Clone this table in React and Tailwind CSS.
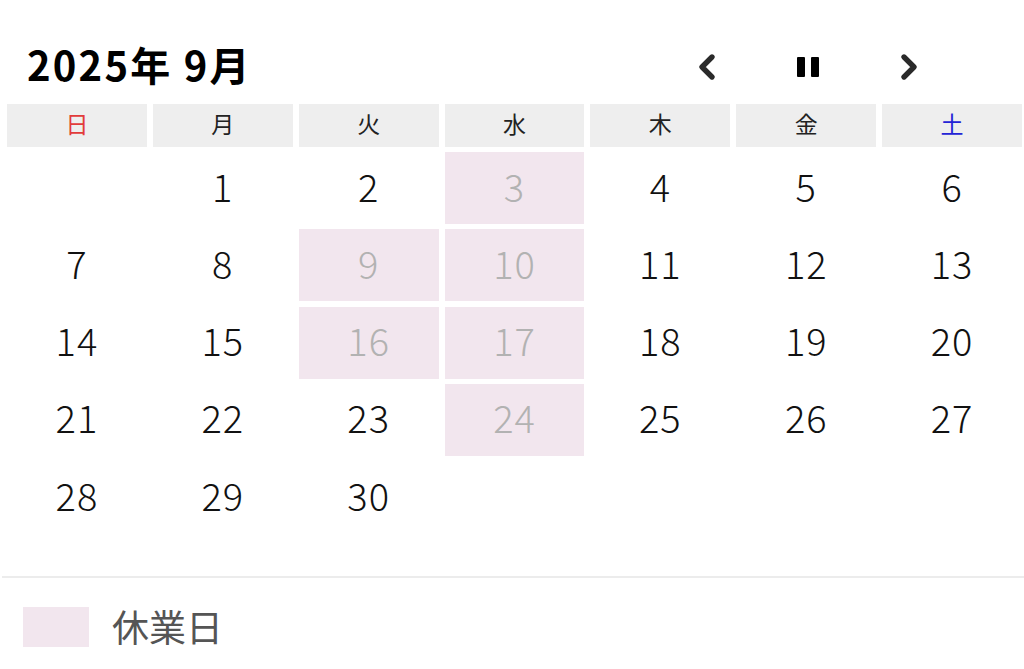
import { ChevronLeft, ChevronRight } from "lucide-react";

const weekdays = [
  { label: "日", color: "text-[#e23b3b]" },
  { label: "月", color: "text-[#222]" },
  { label: "火", color: "text-[#222]" },
  { label: "水", color: "text-[#222]" },
  { label: "木", color: "text-[#222]" },
  { label: "金", color: "text-[#222]" },
  { label: "土", color: "text-[#2424d6]" },
];

const holidays = [3, 9, 10, 16, 17, 24];

// September 2025 starts on Monday
const cells = [null, ...Array.from({ length: 30 }, (_, i) => i + 1)];
while (cells.length < 35) cells.push(null);

const jp = { fontFamily: '"Noto Sans CJK JP", "Noto Sans", sans-serif' };

export default function App() {
  return (
    <div className="w-[1024px] h-[669px] bg-white overflow-hidden" style={jp}>
      {/* header */}
      <div className="flex items-center h-[104px] pt-[24px]">
        <h1 className="pl-[27px] text-[40px] font-bold text-black leading-none tracking-[2.2px]">
          2025年 9月
        </h1>
        <div className="ml-auto mr-[65px] pt-[5px] flex items-center">
          <button className="w-[101px] flex justify-center text-[#2a2a2a]">
            <ChevronLeft size={40} strokeWidth={3.2} />
          </button>
          <button className="w-[101px] flex justify-center gap-[6px]">
            <span className="block w-[8px] h-[20px] bg-black rounded-[1px]" />
            <span className="block w-[8px] h-[20px] bg-black rounded-[1px]" />
          </button>
          <button className="w-[101px] flex justify-center text-[#2a2a2a]">
            <ChevronRight size={40} strokeWidth={3.2} />
          </button>
        </div>
      </div>

      {/* weekday row */}
      <div className="grid grid-cols-7 gap-x-[6px] pl-[7px] pr-[2px]">
        {weekdays.map((d) => (
          <div
            key={d.label}
            className={`h-[43px] pb-[5px] bg-[#eeeeee] flex items-center justify-center text-[23px] ${d.color}`}
          >
            {d.label}
          </div>
        ))}
      </div>

      {/* days */}
      <div className="grid grid-cols-7 gap-x-[6px] gap-y-[5.33px] pl-[7px] pr-[2px] mt-[5px]">
        {cells.map((n, i) => {
          const off = n && holidays.includes(n);
          return (
            <div
              key={i}
              className={`h-[72px] pb-[6px] flex items-center justify-center text-[38px] font-light tracking-[1px] ${
                off ? "bg-[#f2e6ee] text-[#b2b2b2]" : "text-[#111]"
              }`}
            >
              {n}
            </div>
          );
        })}
      </div>

      {/* legend */}
      <div className="mt-[43px] ml-[2px] h-[2px] bg-[#ececec]" />
      <div className="flex items-center mt-[29px] pl-[23px]">
        <span className="block w-[66px] h-[40px] bg-[#f2e6ee]" />
        <span className="ml-[23px] pb-[2px] text-[37px] text-[#555] leading-none">休業日</span>
      </div>
    </div>
  );
}
